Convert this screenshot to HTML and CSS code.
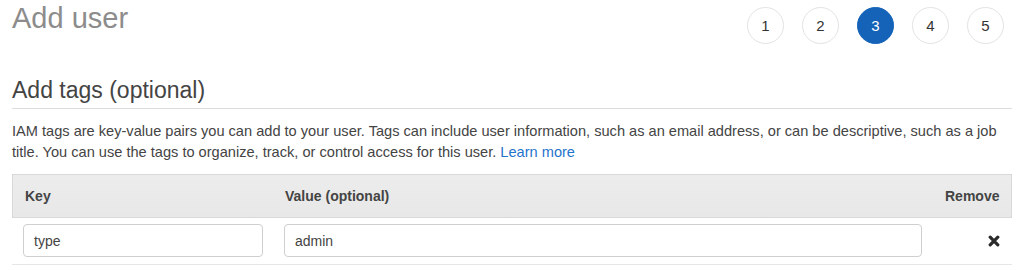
FILE: index.html
```html
<!DOCTYPE html>
<html>
<head>
<meta charset="utf-8">
<link rel="stylesheet" href="styles.css">
</head>
<body>
<div class="page">
  <div class="topbar">
    <h1 class="title">Add user</h1>
    <ol class="steps">
      <li class="step">1</li>
      <li class="step">2</li>
      <li class="step active">3</li>
      <li class="step">4</li>
      <li class="step">5</li>
    </ol>
  </div>
  <h2 class="section-title">Add tags (optional)</h2>
  <p class="desc"><span>IAM tags are key-value pairs you can add to your user. Tags can include user information, such as an email address, or can be descriptive, such as a job</span> <span>title. You can use the tags to organize, track, or control access for this user.</span> <a class="link" href="#">Learn more</a></p>
  <div class="tags">
    <div class="thead">
      <div class="th">Key</div>
      <div class="th">Value (optional)</div>
      <div class="th th-right">Remove</div>
    </div>
    <div class="trow">
      <div class="td td-key"><input class="field field-key" type="text" value="type"></div>
      <div class="td td-val"><input class="field field-val" type="text" value="admin"></div>
      <div class="td td-remove">
        <svg class="remove-icon" width="12" height="12" viewBox="0 0 12 12" aria-hidden="true">
          <path d="M2.2 2.2 L9.8 9.8 M9.8 2.2 L2.2 9.8" stroke="#2b2b2b" stroke-width="3.2" stroke-linecap="round" fill="none"/>
        </svg>
      </div>
    </div>
  </div>
</div>
</body>
</html>
```

FILE: styles.css
```css
* { box-sizing: border-box; }
html, body {
  margin: 0;
  padding: 0;
  background: #fff;
}
body {
  font-family: "Liberation Sans", Arial, sans-serif;
  color: #444;
}
.page {
  padding: 0 12px;
  width: 1024px;
}
.topbar {
  display: flex;
  justify-content: space-between;
  align-items: flex-start;
  height: 44px;
}
.title {
  margin: 1px 0 0 0;
  font-size: 29px;
  line-height: 34px;
  font-weight: normal;
  color: #8c8c8c;
}
.steps {
  list-style: none;
  margin: 7px 8px 0 0;
  padding: 0;
  display: flex;
  gap: 18px;
}
.step {
  width: 37px;
  height: 37px;
  border-radius: 50%;
  border: 1px solid #e3e3e3;
  display: flex;
  align-items: center;
  justify-content: center;
  font-size: 15px;
  color: #333;
  background: #fff;
}
.step.active {
  background: #1463b8;
  border-color: #1463b8;
  color: #fff;
}
.section-title {
  margin: 32px 0 0 0;
  padding-bottom: 4px;
  font-size: 23px;
  line-height: 28px;
  font-weight: normal;
  color: #444;
  border-bottom: 1px solid #dcdcdc;
}
.desc {
  margin: 12px 0 0 0;
  font-size: 14.6px;
  line-height: 21px;
  color: #444;
}
.link {
  color: #1f74cc;
  text-decoration: none;
}
.tags {
  margin-top: 11px;
}
.thead, .trow {
  display: grid;
  grid-template-columns: 260px 660px 1fr;
}
.thead {
  background: linear-gradient(#ececec, #e8e8e8);
  border: 1px solid #d9d9d9;
}
.th {
  padding: 11px 12px;
  font-size: 14px;
  line-height: 20px;
  font-weight: bold;
  color: #444;
}
.th-right {
  text-align: right;
}
.trow {
  border-bottom: 1px solid #e6e6e6;
}
.td {
  padding: 6px 0 7px 0;
  display: flex;
  align-items: center;
}
.td-key { padding-left: 11px; }
.td-val { padding-left: 12px; }
.td-remove {
  justify-content: flex-end;
  padding-right: 12px;
}
.field {
  height: 33px;
  border: 1px solid #cfcfcf;
  border-radius: 4px;
  padding: 0 10px;
  font-family: "Liberation Sans", Arial, sans-serif;
  font-size: 14px;
  color: #444;
  background: #fff;
  outline: none;
}
.field-key { width: 240px; }
.field-val { width: 638px; }
.remove-icon {
  display: block;
}
```
